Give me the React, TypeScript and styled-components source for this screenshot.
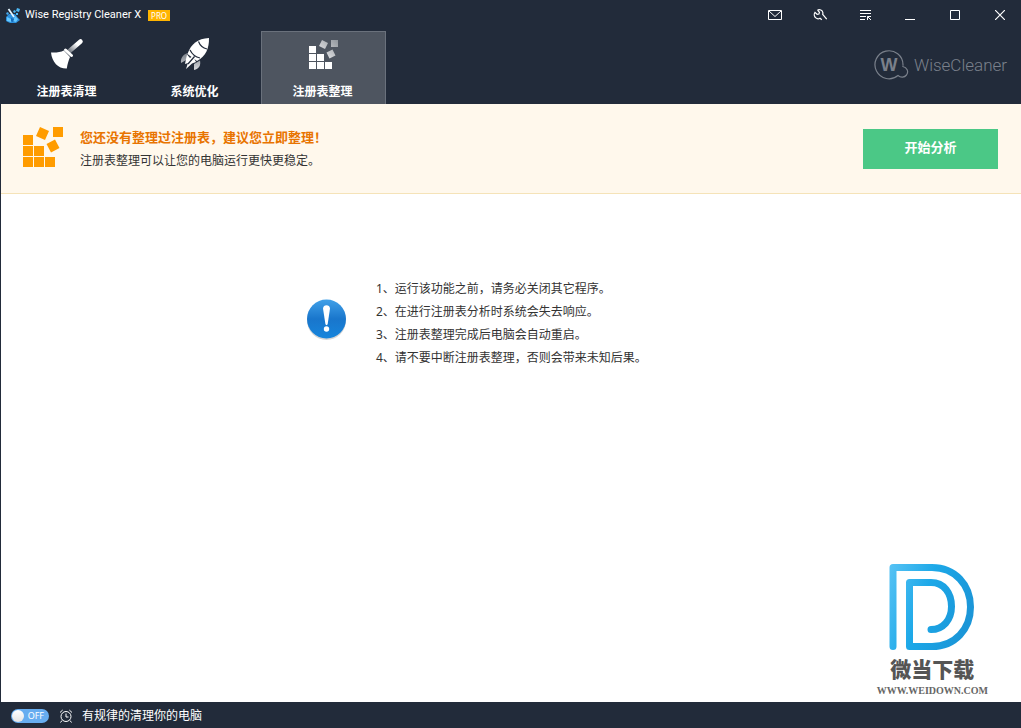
import React, { useState } from "react";
import styled, { createGlobalStyle } from "styled-components";

const cjk = '"Noto Sans", "Noto Sans CJK SC", sans-serif';
const navy = "#222b3a";

const GlobalStyle = createGlobalStyle`
  * { box-sizing: border-box; }
  body { margin: 0; background: ${navy}; font-family: ${cjk}; font-size: 12px; color: #333; }
  button { font-family: inherit; border: 0; padding: 0; cursor: pointer; }
  ol, p, h1 { margin: 0; padding: 0; }
  svg { display: block; flex: none; }
`;

const Window = styled.div`
  display: flex;
  flex-direction: column;
  min-height: 100vh;
  background: ${navy};
`;

const TitleBar = styled.header`
  display: flex;
  align-items: center;
  height: 30px;
  margin-bottom: 1px;
  padding-left: 5px;
`;

const AppName = styled.h1`
  font: 400 11px/16px Roboto, sans-serif;
  color: #fff;
  margin: 0 7px 0 4px;
  white-space: nowrap;
`;

const ProBadge = styled.span`
  width: 22px;
  height: 11px;
  background: #ffb400;
  color: #fff;
  font: 400 8px/11px "Noto Sans", sans-serif;
  text-align: center;
`;

const WindowButtons = styled.div`
  display: flex;
  margin-left: auto;
`;

const WindowButton = styled.button`
  width: 45px;
  height: 30px;
  padding-left: 2px;
  display: flex;
  align-items: center;
  justify-content: center;
  background: transparent;
  color: #fff;
  &:hover { background: #3a4352; }
`;

const NavBar = styled.div`
  display: flex;
  justify-content: space-between;
  height: 73px;
  padding: 0 14px 0 5px;
`;

const Tabs = styled.nav`
  display: flex;
  gap: 3px;
`;

const Tab = styled.button<{ $active?: boolean }>`
  width: 125px;
  display: flex;
  flex-direction: column;
  align-items: center;
  justify-content: space-between;
  padding: 5px 2px 3px 0;
  border: 1px solid ${(p) => (p.$active ? "#6a717c" : "transparent")};
  border-bottom: 0;
  background: ${(p) => (p.$active ? "#4e5560" : "transparent")};
  color: #fff;
  font-size: 12px;
  font-weight: 700;
  line-height: 18px;
`;

const Brand = styled.div`
  display: flex;
  align-items: center;
  gap: 5px;
  padding-bottom: 5px;
  color: #7a808b;
  font: 300 17px/24px Roboto, "Liberation Sans", sans-serif;
`;

const Body = styled.main`
  flex: 1;
  display: flex;
  flex-direction: column;
  margin-left: 1px;
  background: #fff;
`;

const Banner = styled.section`
  display: flex;
  align-items: center;
  height: 90px;
  padding: 0 23px 0 21px;
  background: #fff8ec;
  border-bottom: 1px solid #f5e3b8;
`;

const BannerText = styled.div`
  flex: 1;
  display: flex;
  flex-direction: column;
  gap: 2px;
  margin-left: 16px;
  line-height: 22px;
`;

const BannerTitle = styled.p`
  color: #e87400;
  font-size: 13px;
  font-weight: 700;
`;

const PrimaryButton = styled.button`
  width: 135px;
  height: 40px;
  padding-bottom: 4px;
  background: #4bc886;
  color: #fff;
  font-size: 13px;
  font-weight: 700;
`;

const Notice = styled.section`
  display: flex;
  align-items: center;
  gap: 29px;
  padding: 83px 20px 0 30%;
`;

const Steps = styled.ol`
  list-style: none;
  line-height: 23px;
`;

const Watermark = styled.div`
  display: flex;
  flex-direction: column;
  align-items: center;
  align-self: flex-end;
  margin: auto 33px 5px 0;
  color: #555;
`;

const WatermarkName = styled.span`
  font: 900 21px/30px "Noto Sans CJK SC", sans-serif;
  margin: 2px 0;
`;

const WatermarkUrl = styled.span`
  font: 700 10px/12px "Liberation Serif", serif;
  color: #666;
`;

const StatusBar = styled.footer`
  display: flex;
  align-items: center;
  height: 26px;
  padding: 2px 0 0 11px;
  color: #fff;
  line-height: 18px;
`;

const Toggle = styled.label<{ $on: boolean }>`
  position: relative;
  display: flex;
  flex-direction: ${(p) => (p.$on ? "row-reverse" : "row")};
  align-items: center;
  justify-content: space-between;
  width: 38px;
  height: 14px;
  padding: 0 ${(p) => (p.$on ? "1px" : "5px")} 0 ${(p) => (p.$on ? "5px" : "1px")};
  margin-right: 10px;
  border-radius: 7px;
  background: #67adf0;
  font: 400 9px/14px "Noto Sans", sans-serif;
`;

const ToggleInput = styled.input`
  position: absolute;
  inset: 0;
  width: 100%;
  height: 100%;
  margin: 0;
  opacity: 0;
  cursor: pointer;
`;

const Knob = styled.span`
  width: 12px;
  height: 12px;
  border-radius: 50%;
  background: linear-gradient(#fff, #e4e4e4);
`;

const StatusText = styled.span`
  margin-left: 9px;
`;

const AppIcon = () => (
  <svg width="16" height="16" viewBox="0 0 16 16" aria-hidden="true">
    <path d="M1 10l3-3h6l3 4 2 2-4 3H5l-4-2z" fill="#2c8fdc" />
    <path d="M2 10l4 2v3l-4-1zM10 9l3 3-2 3-3-1z" fill="#65c8ff" />
    <path d="M6 11l3 1-1 3-2-1z" fill="#1568b8" />
    <path d="M3.500 2l5.500 8" stroke="#e8f7ff" strokeWidth="1.800" />
    <path d="M9 3l2 1-1 2-2-1zM12 1l3 1-1 3-3-1zM11 6h2v2h-2z" fill="#4db8f5" />
    <path d="M1 6l2-1 1 2-2 1z" fill="#45a9ec" />
  </svg>
);

const MailIcon = () => (
  <svg width="14" height="10" viewBox="0 0 14 10" fill="none" stroke="currentColor">
    <path d="M.5.5h13v9H.5zM1 1l6 5.5L13 1" />
  </svg>
);

const WrenchIcon = () => (
  <svg width="14" height="12" viewBox="-1 0 14 12" fill="none" stroke="currentColor" strokeWidth="1.2">
    <path d="M3.500 1C5.800.1 8.300 1.200 8.800 3.300c.2.800.1 1.400-.1 2l4 4.900M3.500 1l2 2.300-.6 1.700-1.800.3L1 3.400C-.2 5.100.2 7.600 1.800 8.900c1.200 1 2.900 1.100 4.200.3l1.800 1.600" />
  </svg>
);

const MenuIcon = () => (
  <svg width="12" height="12" viewBox="-1 0 12 12" fill="none" stroke="currentColor">
    <path d="M0 1.500h11M0 4.500h11M0 7.500h6M0 10.500h5M7.500 11V7.500H11M7.500 7.500l3.500 3.500" />
  </svg>
);

const MinimizeIcon = () => (
  <svg width="10" height="10" viewBox="0 0 10 10" stroke="currentColor">
    <path d="M0 9.500h10" />
  </svg>
);

const MaximizeIcon = () => (
  <svg width="10" height="10" viewBox="0 0 10 10" fill="none" stroke="currentColor">
    <path d="M.5.5h9v9h-9z" />
  </svg>
);

const CloseIcon = () => (
  <svg width="10" height="10" viewBox="0 0 10 10" stroke="currentColor" strokeWidth="1.200">
    <path d="M0 0l10 10M10 0L0 10" />
  </svg>
);

const BroomIcon = () => (
  <svg width="34" height="34" viewBox="0 0 34 34">
    <defs>
      <linearGradient id="handle" x1="1" y1="0" x2="0" y2="1">
        <stop offset=".3" stopColor="#fff" />
        <stop offset="1" stopColor="#777d86" />
      </linearGradient>
    </defs>
    <path d="M19.500 14L30.500 4.500" stroke="url(#handle)" strokeWidth="4.500" strokeLinecap="round" />
    <path d="M15.500 13l6 5.500" stroke="#fff" strokeWidth="3" strokeLinecap="round" />
    <path d="M1 15.500c5 .3 9.500-.2 12.800-2L20 20c-1.500 3.500-2.500 7-3.200 11.500C8.500 31.800 2 25.500 1 15.500z" fill="#fff" />
  </svg>
);

const RocketIcon = () => (
  <svg width="32" height="34" viewBox="0 0 32 34">
    <defs>
      <linearGradient id="fin" x1="0" y1="0" x2="0" y2="1">
        <stop offset="0" stopColor="#777d86" />
        <stop offset="1" stopColor="#d8dade" />
      </linearGradient>
    </defs>
    <path d="M8.500 16C4 17.500 1.500 21 2 26l6-3.500zM15 27l6-3.500c1 5-1 8.500-6 9.500z" fill="url(#fin)" />
    <path d="M30 1c.2 9.500-3 18.500-12 23l-9.500-7C12 7 18.500 1.500 30 1z" fill="#fff" />
    <path d="M8 17.500l3 3.500c2-2.500 5-2 4.500 1L17 25l-4 1.500L7 32l2-6-3 1z" fill="#fff" />
    <path d="M19.500 4.500c1.500 4 4 6.500 8.500 7.500M11 13c2 4 5 7 10 8M15.500 19.500L9 27" fill="none" stroke={navy} strokeWidth="1.200" />
  </svg>
);

const TabBlocksIcon = () => (
  <svg width="32" height="34" viewBox="-2 -3 32 34">
    <defs>
      <linearGradient id="block" x1="0" y1="1" x2="1" y2="0">
        <stop offset="0" stopColor="#f2f2f3" />
        <stop offset="1" stopColor="#91969d" />
      </linearGradient>
    </defs>
    <path d="M0 6h7v7H0zM0 14h7v7H0zM8 14h7v7H8zM0 22h7v7H0zM8 22h7v7H8zM16 22h7v7h-7z" fill="#fff" />
    <path d="M13 0l6 3-3 6-6-3zM22 0h7v7h-7zM23.500 9.500l3 6-6 3-3-6z" fill="url(#block)" />
  </svg>
);

const BannerBlocksIcon = () => (
  <svg width="42" height="44" viewBox="0 0 42 44" fill="#ff9c00">
    <path d="M1 8h10v10H1zM1 19h10v10H1zM12 19h10v10H12zM1 30h10v10H1zM12 30h10v10H12zM23 30h10v10H23zM31 0h10v10H31zM18 0l9 4-4 9-9-4zM33 12.500l4.500 8.500-8.500 4.500-4.500-8.500z" />
  </svg>
);

const BrandMark = () => (
  <svg width="35" height="30" viewBox="0 0 35 30" fill="none">
    <path d="M29 14.800A14 14 0 1 0 24 25.500c3 2.600 6.500 1.900 8.500-.5 2.500-3.500.5-7.800-3.800-8.500" stroke="currentColor" strokeWidth="1.200" />
    <path d="M29 14.500q.1 1.200-.3 2.200" stroke="currentColor" />
    <text x="15" y="21" textAnchor="middle" fill="currentColor" fontFamily="Liberation Sans" fontWeight="700" fontSize="18">W</text>
  </svg>
);

const AlertIcon = () => (
  <svg width="40" height="48" viewBox="1 0 40 48">
    <defs>
      <linearGradient id="alert" x1="0" y1="0" x2="0" y2="1">
        <stop offset="0" stopColor="#40a0e8" />
        <stop offset=".5" stopColor="#1976cc" />
        <stop offset="1" stopColor="#1685dc" />
      </linearGradient>
    </defs>
    <circle cx="20.500" cy="21.500" r="19.500" fill="#d5d5d5" />
    <circle cx="20.500" cy="20" r="19.500" fill="url(#alert)" />
    <path d="M17 9.500c0-4.500 7-4.500 7 0l-2.300 15.500c-.3 1.500-2 1.500-2.300 0z" fill="#fff" />
    <circle cx="20.500" cy="30" r="2.700" fill="#fff" />
  </svg>
);

const ClockIcon = () => (
  <svg width="14" height="14" viewBox="0 0 14 14" fill="none" stroke="currentColor">
    <circle cx="7" cy="7.500" r="5" />
    <path d="M7 4.500v3.500H9.500M1 3.500L3.700 1M13 3.500L10.300 1M3 11.500l-1.500 2M11 11.500l1.500 2" />
  </svg>
);

const WatermarkLogo = () => (
  <svg width="88" height="88" viewBox="0 0 88 88" fill="none">
    <defs>
      <linearGradient id="mark" gradientUnits="userSpaceOnUse" x1="0" y1="0" x2="88" y2="30">
        <stop offset="0" stopColor="#5ac4f5" />
        <stop offset=".5" stopColor="#1ca8e8" />
        <stop offset="1" stopColor="#1b96d8" />
      </linearGradient>
    </defs>
    <path
      d="M5 83.500V4.500H44C67 4.500 82.500 22 82.500 44S67 83.500 44 83.500H21.500V19.500H43C56 19.500 63.500 30 63.500 43.500S55 66.500 43 66.500"
      stroke="url(#mark)"
      strokeWidth="7"
      strokeLinecap="round"
      strokeLinejoin="round"
    />
  </svg>
);

const windowButtons = [
  { label: "反馈", Icon: MailIcon },
  { label: "设置", Icon: WrenchIcon },
  { label: "菜单", Icon: MenuIcon },
  { label: "最小化", Icon: MinimizeIcon },
  { label: "最大化", Icon: MaximizeIcon },
  { label: "关闭", Icon: CloseIcon },
];

const tabs = [
  { label: "注册表清理", Icon: BroomIcon },
  { label: "系统优化", Icon: RocketIcon },
  { label: "注册表整理", Icon: TabBlocksIcon },
];

const steps = [
  "1、运行该功能之前，请务必关闭其它程序。",
  "2、在进行注册表分析时系统会失去响应。",
  "3、注册表整理完成后电脑会自动重启。",
  "4、请不要中断注册表整理，否则会带来未知后果。",
];

export default function App() {
  const [active, setActive] = useState(2);
  const [scheduled, setScheduled] = useState(false);

  return (
    <Window lang="zh-CN">
      <GlobalStyle />
      <TitleBar>
        <AppIcon />
        <AppName>Wise Registry Cleaner X</AppName>
        <ProBadge>PRO</ProBadge>
        <WindowButtons>
          {windowButtons.map(({ label, Icon }) => (
            <WindowButton key={label} aria-label={label}>
              <Icon />
            </WindowButton>
          ))}
        </WindowButtons>
      </TitleBar>
      <NavBar>
        <Tabs>
          {tabs.map(({ label, Icon }, i) => (
            <Tab key={label} $active={i === active} onClick={() => setActive(i)}>
              <Icon />
              {label}
            </Tab>
          ))}
        </Tabs>
        <Brand>
          <BrandMark />
          WiseCleaner
        </Brand>
      </NavBar>
      <Body>
        <Banner>
          <BannerBlocksIcon />
          <BannerText>
            <BannerTitle>您还没有整理过注册表，建议您立即整理！</BannerTitle>
            <p>注册表整理可以让您的电脑运行更快更稳定。</p>
          </BannerText>
          <PrimaryButton>开始分析</PrimaryButton>
        </Banner>
        <Notice>
          <AlertIcon />
          <Steps>
            {steps.map((step) => (
              <li key={step}>{step}</li>
            ))}
          </Steps>
        </Notice>
        <Watermark>
          <WatermarkLogo />
          <WatermarkName>微当下载</WatermarkName>
          <WatermarkUrl>WWW.WEIDOWN.COM</WatermarkUrl>
        </Watermark>
      </Body>
      <StatusBar>
        <Toggle $on={scheduled}>
          <Knob />
          {scheduled ? "ON" : "OFF"}
          <ToggleInput
            type="checkbox"
            role="switch"
            aria-label="有规律的清理你的电脑"
            checked={scheduled}
            onChange={(e) => setScheduled(e.target.checked)}
          />
        </Toggle>
        <ClockIcon />
        <StatusText>有规律的清理你的电脑</StatusText>
      </StatusBar>
    </Window>
  );
}
